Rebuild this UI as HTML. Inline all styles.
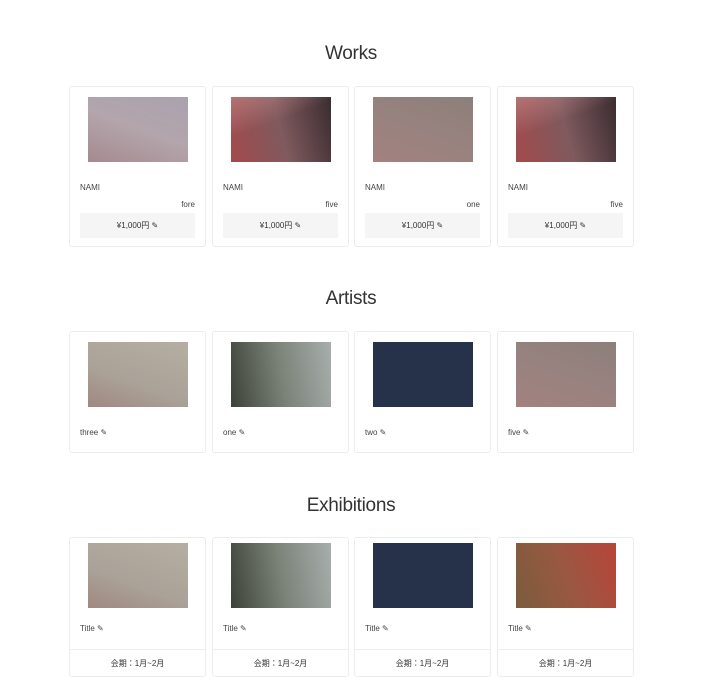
<!DOCTYPE html>
<html><head><meta charset="utf-8"><style>
*{margin:0;padding:0;box-sizing:border-box}
body{width:702px;height:673px;overflow:hidden;background:#fff;font-family:"Liberation Sans","Noto Sans CJK JP",sans-serif;color:#333;position:relative}
h2{position:absolute;left:0;width:702px;text-align:center;font-weight:400;font-size:19px;color:#333;letter-spacing:-0.3px}
.card{position:absolute;width:137px;border:1px solid #ececec;border-radius:3px;background:#fff}
.img{position:absolute;left:18px;width:100px;height:65px}
.t{position:absolute;left:10px;font-size:8px;color:#444}
.r{position:absolute;right:10px;font-size:8px;color:#444}
.price{position:absolute;left:10px;right:10px;height:25px;background:#f5f5f5;font-size:8px;text-align:center;line-height:25px;color:#333}
.div{position:absolute;left:0;right:0;border-top:1px solid #eee}
.per{position:absolute;left:0;right:0;text-align:center;font-size:8px;color:#333}
.five{background:linear-gradient(160deg,rgba(200,140,140,.6),rgba(200,140,140,0) 40%),linear-gradient(75deg,#a44a4c,#7f5a5e 50%,#3a2c30)}
</style></head><body>
<h2 style="top:43px">Works</h2>
<h2 style="top:288px">Artists</h2>
<h2 style="top:495px">Exhibitions</h2>

<div class="card" style="left:69px;top:86px;height:161px">
<div class="img" style="top:10px;background:linear-gradient(20deg,#a58a90,#b3a5ab 50%,#aaa2b0)"></div>
<div class="t" style="top:96px">NAMI</div><div class="r" style="top:113px">fore</div>
<div class="price" style="top:126px">¥1,000円 ✎</div></div>
<div class="card" style="left:212px;top:86px;height:161px">
<div class="img five" style="top:10px"></div>
<div class="t" style="top:96px">NAMI</div><div class="r" style="top:113px">five</div>
<div class="price" style="top:126px">¥1,000円 ✎</div></div>
<div class="card" style="left:354px;top:86px;height:161px">
<div class="img" style="top:10px;background:linear-gradient(20deg,#a3817f,#98827f 50%,#8c7f7b)"></div>
<div class="t" style="top:96px">NAMI</div><div class="r" style="top:113px">one</div>
<div class="price" style="top:126px">¥1,000円 ✎</div></div>
<div class="card" style="left:497px;top:86px;height:161px">
<div class="img five" style="top:10px"></div>
<div class="t" style="top:96px">NAMI</div><div class="r" style="top:113px">five</div>
<div class="price" style="top:126px">¥1,000円 ✎</div></div>

<div class="card" style="left:69px;top:331px;height:122px">
<div class="img" style="top:10px;background:linear-gradient(20deg,#a08880,#aaa298 40%,#b5aea2)"></div>
<div class="t" style="top:96px">three ✎</div></div>
<div class="card" style="left:212px;top:331px;height:122px">
<div class="img" style="top:10px;background:linear-gradient(80deg,#3c4238,#7b8278 50%,#a8aeac)"></div>
<div class="t" style="top:96px">one ✎</div></div>
<div class="card" style="left:354px;top:331px;height:122px">
<div class="img" style="top:10px;background:#26324a"></div>
<div class="t" style="top:96px">two ✎</div></div>
<div class="card" style="left:497px;top:331px;height:122px">
<div class="img" style="top:10px;background:linear-gradient(20deg,#a3817f,#98827f 50%,#8c7f7b)"></div>
<div class="t" style="top:96px">five ✎</div></div>

<div class="card" style="left:69px;top:537px;height:140px">
<div class="img" style="top:5px;background:linear-gradient(20deg,#a08880,#aaa298 40%,#b5aea2)"></div>
<div class="t" style="top:86px">Title ✎</div><div class="div" style="top:111px"></div>
<div class="per" style="top:120px">会期：1月~2月</div></div>
<div class="card" style="left:212px;top:537px;height:140px">
<div class="img" style="top:5px;background:linear-gradient(80deg,#3c4238,#7b8278 50%,#a8aeac)"></div>
<div class="t" style="top:86px">Title ✎</div><div class="div" style="top:111px"></div>
<div class="per" style="top:120px">会期：1月~2月</div></div>
<div class="card" style="left:354px;top:537px;height:140px">
<div class="img" style="top:5px;background:#26324a"></div>
<div class="t" style="top:86px">Title ✎</div><div class="div" style="top:111px"></div>
<div class="per" style="top:120px">会期：1月~2月</div></div>
<div class="card" style="left:497px;top:537px;height:140px">
<div class="img" style="top:5px;background:linear-gradient(70deg,#7a5c3c,#9a5842 50%,#b8443a)"></div>
<div class="t" style="top:86px">Title ✎</div><div class="div" style="top:111px"></div>
<div class="per" style="top:120px">会期：1月~2月</div></div>
</body></html>
